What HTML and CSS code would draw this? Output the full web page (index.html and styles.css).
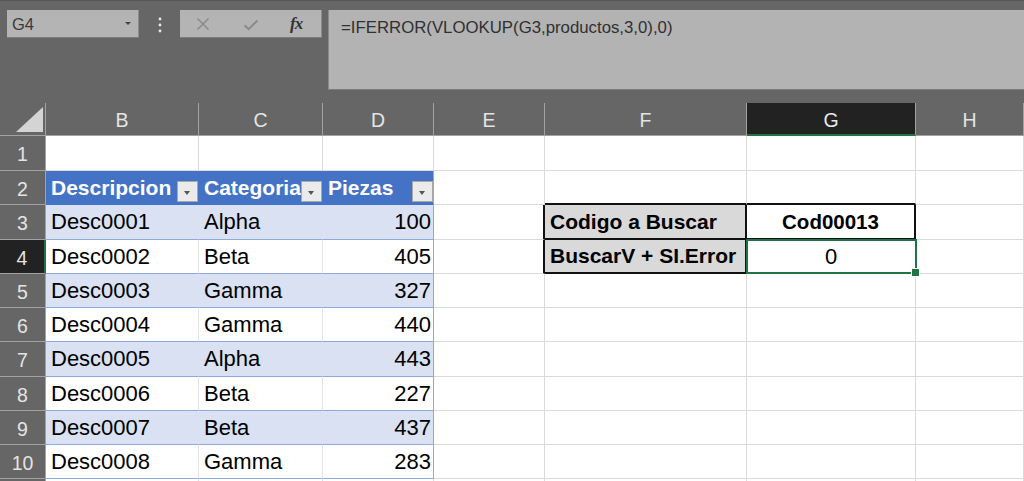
FILE: index.html
```html
<!DOCTYPE html>
<html lang="es">
<head>
<meta charset="utf-8">
<title>Excel - BuscarV + SI.Error</title>
<link rel="stylesheet" href="styles.css">
</head>
<body>
<div class="app">
  <div class="top">
    <div class="namebox"><span class="nb-text">G4</span><span class="nb-arrow"></span></div>
    <div class="dots">
      <svg width="6" height="16" viewBox="0 0 6 16"><circle cx="3" cy="2" r="1.4" fill="#e8e8e8"/><circle cx="3" cy="8" r="1.4" fill="#e8e8e8"/><circle cx="3" cy="14" r="1.4" fill="#e8e8e8"/></svg>
    </div>
    <div class="fxbox">
      <svg class="ic-x" width="14" height="14" viewBox="0 0 14 14"><path d="M1.5 1.5L12.5 12.5M12.5 1.5L1.5 12.5" stroke="#8a8a8a" stroke-width="1.5" fill="none"/></svg>
      <svg class="ic-ok" width="16" height="12" viewBox="0 0 16 12"><path d="M1.5 6.2L5.6 10.2L14.5 1.5" stroke="#8a8a8a" stroke-width="2" fill="none"/></svg>
      <span class="ic-fx">fx</span>
    </div>
    <div class="formula">=IFERROR(VLOOKUP(G3,productos,3,0),0)</div>
  </div>

  <div class="sheet">
    <!-- column headers -->
    <div class="corner"><span class="tri"></span></div>
    <div class="ch">B</div>
    <div class="ch">C</div>
    <div class="ch">D</div>
    <div class="ch">E</div>
    <div class="ch">F</div>
    <div class="ch ch-sel">G</div>
    <div class="ch">H</div>

    <!-- row 1 -->
    <div class="rh">1</div>
    <div class="c"></div><div class="c"></div><div class="c"></div><div class="c"></div><div class="c"></div><div class="c"></div><div class="c"></div>

    <!-- row 2 -->
    <div class="rh">2</div>
    <div class="c th">Descripcion<span class="fbtn"></span></div>
    <div class="c th">Categoria<span class="fbtn"></span></div>
    <div class="c th last">Piezas<span class="fbtn"></span></div>
    <div class="c"></div>
    <div class="c bb"></div>
    <div class="c bb"></div>
    <div class="c"></div>

    <!-- row 3 -->
    <div class="rh">3</div>
    <div class="c band">Desc0001</div>
    <div class="c band">Alpha</div>
    <div class="c band num last">100</div>
    <div class="c br"></div>
    <div class="c lbl">Codigo a Buscar</div>
    <div class="c val">Cod00013</div>
    <div class="c"></div>

    <!-- row 4 -->
    <div class="rh rh-sel">4</div>
    <div class="c tw">Desc0002</div>
    <div class="c tw">Beta</div>
    <div class="c tw num last">405</div>
    <div class="c br"></div>
    <div class="c lbl">BuscarV + SI.Error</div>
    <div class="c sel">0</div>
    <div class="c"></div>

    <!-- row 5 -->
    <div class="rh">5</div>
    <div class="c band">Desc0003</div>
    <div class="c band">Gamma</div>
    <div class="c band num last">327</div>
    <div class="c"></div><div class="c"></div><div class="c"></div><div class="c"></div>

    <!-- row 6 -->
    <div class="rh">6</div>
    <div class="c tw">Desc0004</div>
    <div class="c tw">Gamma</div>
    <div class="c tw num last">440</div>
    <div class="c"></div><div class="c"></div><div class="c"></div><div class="c"></div>

    <!-- row 7 -->
    <div class="rh">7</div>
    <div class="c band">Desc0005</div>
    <div class="c band">Alpha</div>
    <div class="c band num last">443</div>
    <div class="c"></div><div class="c"></div><div class="c"></div><div class="c"></div>

    <!-- row 8 -->
    <div class="rh">8</div>
    <div class="c tw">Desc0006</div>
    <div class="c tw">Beta</div>
    <div class="c tw num last">227</div>
    <div class="c"></div><div class="c"></div><div class="c"></div><div class="c"></div>

    <!-- row 9 -->
    <div class="rh">9</div>
    <div class="c band">Desc0007</div>
    <div class="c band">Beta</div>
    <div class="c band num last">437</div>
    <div class="c"></div><div class="c"></div><div class="c"></div><div class="c"></div>

    <!-- row 10 -->
    <div class="rh">10</div>
    <div class="c tw">Desc0008</div>
    <div class="c tw">Gamma</div>
    <div class="c tw num last">283</div>
    <div class="c"></div><div class="c"></div><div class="c"></div><div class="c"></div>

    <!-- row 11 (only its top edge is in view) -->
    <div class="rh"></div>
    <div class="c"></div><div class="c"></div><div class="c"></div><div class="c"></div><div class="c"></div><div class="c"></div><div class="c"></div>
  </div>
</div>
</body>
</html>
```

FILE: styles.css
```css
* { box-sizing: border-box; }

html, body {
  margin: 0;
  padding: 0;
}

body {
  width: 1024px;
  height: 481px;
  overflow: hidden;
  background: #666666;
  font-family: "Liberation Sans", Arial, sans-serif;
}

.app {
  width: 1024px;
}

/* ---------- top: name box + formula bar ---------- */
.top {
  height: 103px;
  background: #666666;
  border-top: 1px solid #575757;
  display: flex;
  align-items: flex-start;
  padding-top: 9px;
}

.namebox {
  margin-left: 7px;
  width: 132px;
  height: 28px;
  background: #b4b4b4;
  border-bottom: 1px solid #7c7c7c;
  border-right: 1px solid #8c8c8c;
  display: flex;
  align-items: center;
  justify-content: space-between;
  padding: 2px 7px 0 5px;
  color: #3a3a3a;
  font-size: 16.5px;
}

.nb-arrow {
  width: 0;
  height: 0;
  border-left: 3px solid transparent;
  border-right: 3px solid transparent;
  border-top: 3px solid #444;
  margin-bottom: 3px;
}

.dots {
  width: 41px;
  height: 28px;
  display: flex;
  align-items: center;
  justify-content: center;
  padding-top: 2px;
}

.fxbox {
  width: 142px;
  height: 28px;
  background: #b4b4b4;
  border-bottom: 1px solid #7c7c7c;
  border-right: 1px solid #8c8c8c;
  display: flex;
  align-items: center;
  padding-left: 16px;
}

.ic-x { margin-top: 1px; }
.ic-ok { margin-left: 33px; margin-top: 2px; }

.ic-fx {
  margin-left: 31px;
  font-family: "Liberation Serif", "Times New Roman", serif;
  font-style: italic;
  font-weight: bold;
  font-size: 17px;
  color: #333;
  letter-spacing: -1px;
}

.formula {
  margin-left: 6px;
  flex: 1;
  height: 80px;
  background: #b3b3b3;
  border-bottom: 1px solid #7c7c7c;
  border-left: 1px solid #8c8c8c;
  padding: 8px 0 0 12px;
  font-size: 16.8px;
  line-height: 20px;
  color: #303030;
}

/* ---------- sheet grid ---------- */
.sheet {
  display: grid;
  grid-template-columns: 46px 153px 124px 111px 111px 202px 169px 108px;
  grid-template-rows: 33px 35px 34px 35px 34px 34px 34px 35px 34px 34px 34px 20px;
}

.corner {
  background: #666666;
  border-right: 1px solid #a2a2a2;
  border-bottom: 1px solid #a2a2a2;
  position: relative;
}

.tri {
  position: absolute;
  right: 2px;
  bottom: 3px;
  width: 0;
  height: 0;
  border-left: 27px solid transparent;
  border-bottom: 25px solid #d4d4d4;
}

.ch, .rh {
  background: #666666;
  color: #e4e4e4;
  font-size: 19.5px;
  display: flex;
  align-items: center;
  justify-content: center;
  padding-top: 3px;
  border-right: 1px solid #a2a2a2;
  border-bottom: 1px solid #a2a2a2;
}

.ch-sel {
  background: #222222;
  border-bottom: 2px solid #217346;
  padding-top: 4px;
  color: #e8e8e8;
}

.rh-sel {
  background: #222222;
  border-right: 2px solid #217346;
}

.c {
  background: #ffffff;
  border-right: 1px solid #dadada;
  border-bottom: 1px solid #dadada;
  display: flex;
  align-items: center;
  padding: 0 5px;
  font-size: 22px;
  color: #000;
  white-space: nowrap;
  overflow: hidden;
  position: relative;
}

/* table styling */
.th {
  background: #4472c4;
  color: #ffffff;
  font-weight: bold;
  font-size: 21px;
  border-right-color: #4472c4;
  border-bottom-color: #4472c4;
}

.band {
  background: #d9e1f2;
  border-right-color: #d9e1f2;
  border-bottom-color: #8ea9db;
}

.tw {
  border-bottom-color: #8ea9db;
  border-right-color: #e3e3e3;
}

.last { border-right-color: #8ea9db; }

.num {
  justify-content: flex-end;
  padding-right: 2px;
}

.fbtn {
  position: absolute;
  right: 0;
  top: 10px;
  width: 21px;
  height: 21px;
  background: #ebebeb;
  border: 1px solid #a8a8a8;
}

.fbtn::after {
  content: "";
  position: absolute;
  left: 6px;
  top: 9px;
  width: 0;
  height: 0;
  border-left: 3.5px solid transparent;
  border-right: 3.5px solid transparent;
  border-top: 4px solid #555;
}

/* lookup box */
.bb { border-bottom: 2px solid #111; }
.br { border-right: 2px solid #111; }

.lbl {
  background: #d9d9d9;
  font-weight: bold;
  font-size: 21px;
  border-right: 2px solid #111;
  border-bottom: 2px solid #111;
}

.val {
  justify-content: center;
  font-weight: bold;
  font-size: 20.5px;
  border-right: 2px solid #111;
  border-bottom: 2px solid #111;
}

.sel {
  justify-content: center;
  overflow: visible;
  z-index: 2;
}

.sel::after {
  content: "";
  position: absolute;
  left: -1px;
  top: -1px;
  right: -2px;
  bottom: -1px;
  border: 2px solid #217346;
}

.sel::before {
  content: "";
  position: absolute;
  right: -5px;
  bottom: -4px;
  width: 7px;
  height: 7px;
  background: #217346;
  border: 1px solid #ffffff;
  z-index: 3;
}
```
